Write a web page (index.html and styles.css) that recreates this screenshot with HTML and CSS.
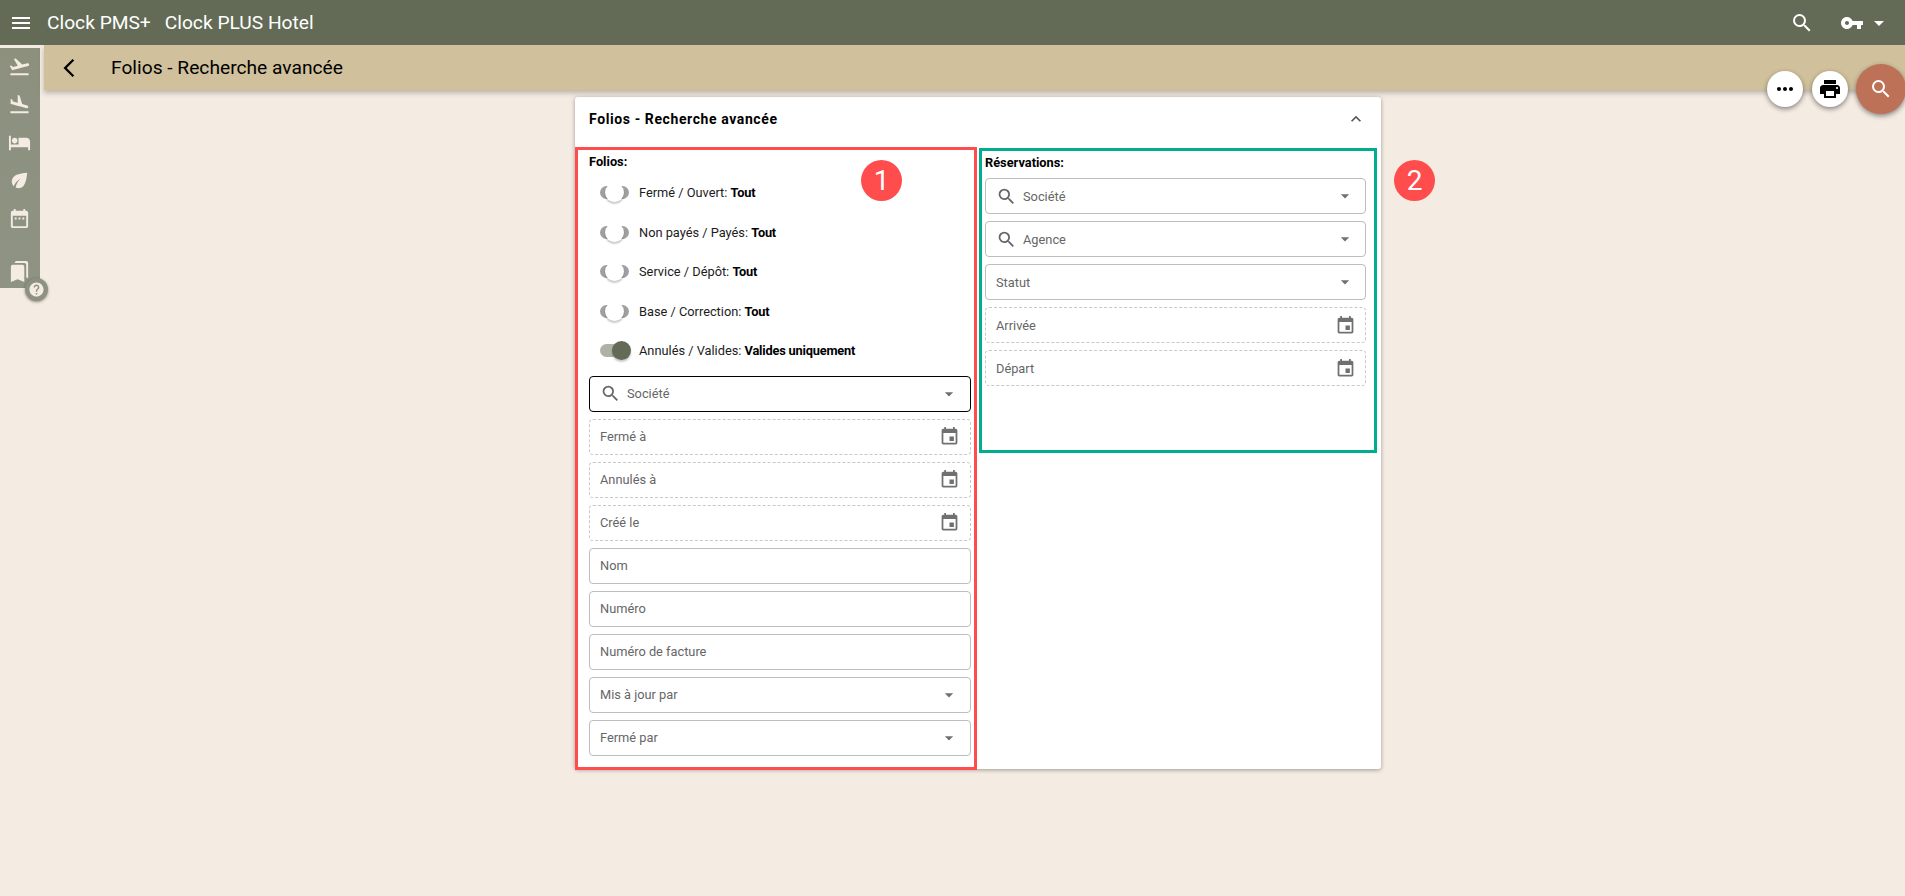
FILE: index.html
```html
<!DOCTYPE html>
<html lang="fr">
<head>
<meta charset="utf-8">
<title>Folios - Recherche avancée</title>
<link rel="stylesheet" href="styles.css">
</head>
<body>
<svg class="defs" width="0" height="0" aria-hidden="true">
  <symbol id="i-search" viewBox="0 0 24 24"><path d="M15.5 14h-.79l-.28-.27A6.47 6.47 0 0 0 16 9.5 6.5 6.5 0 1 0 9.5 16c1.61 0 3.09-.59 4.23-1.57l.27.28v.79l5 4.99L20.49 19l-4.99-5zm-6 0C7.01 14 5 11.99 5 9.5S7.01 5 9.5 5 14 7.01 14 9.5 11.99 14 9.5 14z"/></symbol>
  <symbol id="i-event" viewBox="0 0 24 24"><path d="M17 12h-5v5h5v-5zM16 1v2H8V1H6v2H5c-1.11 0-1.99.9-1.99 2L3 19c0 1.1.89 2 2 2h14c1.1 0 2-.9 2-2V5c0-1.1-.9-2-2-2h-1V1h-2zm3 18H5V8h14v11z"/></symbol>
  <symbol id="i-caret" viewBox="0 0 24 24"><path d="M7 10l5 5 5-5z"/></symbol>
</svg>

<header class="topbar">
  <svg class="ic menu-ic" viewBox="0 0 24 24"><path d="M3 18h18v-2H3v2zm0-5h18v-2H3v2zm0-7v2h18V6H3z"/></svg>
  <span class="brand">Clock PMS+</span>
  <span class="hotel">Clock PLUS Hotel</span>
  <span class="spacer"></span>
  <svg class="ic top-search"><use href="#i-search"/></svg>
  <svg class="ic top-key" viewBox="0 0 24 24"><path d="M12.65 10C11.83 7.67 9.61 6 7 6c-3.31 0-6 2.69-6 6s2.69 6 6 6c2.61 0 4.83-1.67 5.65-4H17v4h4v-4h2v-4H12.65zM7 14c-1.1 0-2-.9-2-2s.9-2 2-2 2 .9 2 2-.9 2-2 2z"/></svg>
  <svg class="ic top-caret"><use href="#i-caret"/></svg>
</header>

<div class="shell">
  <nav class="sidebar">
    <svg class="side-ic" viewBox="0 0 24 24"><path d="M2.5 19h19v2h-19zm19.57-9.36c-.21-.8-1.04-1.28-1.84-1.06L14.92 10l-6.9-6.43-1.93.51 4.14 7.17-4.97 1.33-1.97-1.54-1.45.39 1.82 3.16.77 1.33 1.6-.43 5.31-1.42 4.35-1.16L21 11.49c.81-.23 1.28-1.05 1.07-1.85z"/></svg>
    <svg class="side-ic" viewBox="0 0 24 24"><path d="M2.5 19h19v2h-19zm7.18-5.73l4.35 1.16 5.31 1.42c.8.21 1.62-.26 1.84-1.06.21-.8-.26-1.62-1.06-1.84l-5.31-1.42-2.76-9.02L10.12 2v8.28L5.15 8.95l-.93-2.32-1.45-.39v5.17l1.6.43 5.31 1.43z"/></svg>
    <svg class="side-ic" viewBox="0 0 24 24"><path d="M7 13c1.66 0 3-1.34 3-3S8.66 7 7 7s-3 1.34-3 3 1.34 3 3 3zm12-6h-8v7H3V5H1v15h2v-3h18v3h2v-9c0-2.21-1.79-4-4-4z"/></svg>
    <svg class="side-ic" viewBox="0 0 24 24"><path d="M6.05 8.05c-2.73 2.73-2.73 7.15-.02 9.88 1.47-3.4 4.09-6.24 7.36-7.93-2.77 2.34-4.71 5.61-5.39 9.32 2.6 1.23 5.8.78 7.95-1.37C19.43 14.47 20 4 20 4S9.53 4.57 6.05 8.05z"/></svg>
    <svg class="side-ic" viewBox="0 0 24 24"><path d="M9 11H7v2h2v-2zm4 0h-2v2h2v-2zm4 0h-2v2h2v-2zm2-7h-1V2h-2v2H8V2H6v2H5c-1.11 0-1.99.9-1.99 2L3 20c0 1.1.89 2 2 2h14c1.1 0 2-.9 2-2V6c0-1.1-.9-2-2-2zm0 16H5V9h14v11z"/></svg>
    <svg class="side-ic side-last" viewBox="0 0 24 24"><path d="M19 18l2 1V3c0-1.1-.9-2-2-2H8.99C7.89 1 7 1.9 7 3h10c1.1 0 2 .9 2 2v13zM15 5H5c-1.1 0-2 .9-2 2v16l7-3 7 3V7c0-1.1-.9-2-2-2z"/></svg>
    <span class="help-badge">
      <svg viewBox="0 0 24 24"><path d="M12 2C6.48 2 2 6.48 2 12s4.48 10 10 10 10-4.48 10-10S17.52 2 12 2zm1 17h-2v-2h2v2zm2.07-7.75l-.9.92C13.45 12.9 13 13.5 13 15h-2v-.5c0-1.1.45-2.1 1.17-2.83l1.24-1.26c.37-.36.59-.86.59-1.41 0-1.1-.9-2-2-2s-2 .9-2 2H8c0-2.21 1.79-4 4-4s4 1.79 4 4c0 .88-.36 1.68-.93 2.25z"/></svg>
    </span>
  </nav>

  <div class="main">
    <div class="subbar">
      <svg class="back-ic" viewBox="0 0 12 24"><path d="M11.67 3.87L9.9 2.1 0 12l9.9 9.9 1.77-1.77L3.54 12z"/></svg>
      <h1 class="page-title">Folios - Recherche avancée</h1>
    </div>

    <section class="card">
      <div class="card-head">
        <h2 class="card-title">Folios - Recherche avancée</h2>
        <svg class="collapse-ic" viewBox="0 0 24 24"><path d="M12 8l-6 6 1.41 1.41L12 10.83l4.59 4.58L18 14z"/></svg>
      </div>
      <div class="card-body">
        <div class="col col-left">
          <div class="col-title">Folios:</div>
          <div class="toggle-row"><span class="toggle"></span><span>Fermé / Ouvert: <b>Tout</b></span></div>
          <div class="toggle-row"><span class="toggle"></span><span>Non payés / Payés: <b>Tout</b></span></div>
          <div class="toggle-row"><span class="toggle"></span><span>Service / Dépôt: <b>Tout</b></span></div>
          <div class="toggle-row"><span class="toggle"></span><span>Base / Correction: <b>Tout</b></span></div>
          <div class="toggle-row"><span class="toggle on"></span><span>Annulés / Valides: <b>Valides uniquement</b></span></div>
          <div class="fields fields-left">
            <div class="field focus"><svg class="f-search"><use href="#i-search"/></svg><span class="f-label">Société</span><svg class="f-caret"><use href="#i-caret"/></svg></div>
            <div class="field dashed"><span class="f-label">Fermé à</span><svg class="f-cal"><use href="#i-event"/></svg></div>
            <div class="field dashed"><span class="f-label">Annulés à</span><svg class="f-cal"><use href="#i-event"/></svg></div>
            <div class="field dashed"><span class="f-label">Créé le</span><svg class="f-cal"><use href="#i-event"/></svg></div>
            <div class="field"><span class="f-label">Nom</span></div>
            <div class="field"><span class="f-label">Numéro</span></div>
            <div class="field"><span class="f-label">Numéro de facture</span></div>
            <div class="field"><span class="f-label">Mis à jour par</span><svg class="f-caret"><use href="#i-caret"/></svg></div>
            <div class="field"><span class="f-label">Fermé par</span><svg class="f-caret"><use href="#i-caret"/></svg></div>
          </div>
          <span class="marker marker-1">1</span>
        </div>
        <div class="col col-right">
          <div class="col-title">Réservations:</div>
          <div class="fields fields-right">
            <div class="field"><svg class="f-search"><use href="#i-search"/></svg><span class="f-label">Société</span><svg class="f-caret"><use href="#i-caret"/></svg></div>
            <div class="field"><svg class="f-search"><use href="#i-search"/></svg><span class="f-label">Agence</span><svg class="f-caret"><use href="#i-caret"/></svg></div>
            <div class="field"><span class="f-label">Statut</span><svg class="f-caret"><use href="#i-caret"/></svg></div>
            <div class="field dashed"><span class="f-label">Arrivée</span><svg class="f-cal"><use href="#i-event"/></svg></div>
            <div class="field dashed"><span class="f-label">Départ</span><svg class="f-cal"><use href="#i-event"/></svg></div>
          </div>
          <span class="marker marker-2">2</span>
        </div>
      </div>
    </section>
  </div>
</div>

<div class="fab-group">
  <span class="fab fab-small"><svg viewBox="0 0 24 24"><path d="M6 10c-1.1 0-2 .9-2 2s.9 2 2 2 2-.9 2-2-.9-2-2-2zm12 0c-1.1 0-2 .9-2 2s.9 2 2 2 2-.9 2-2-.9-2-2-2zm-6 0c-1.1 0-2 .9-2 2s.9 2 2 2 2-.9 2-2-.9-2-2-2z"/></svg></span>
  <span class="fab fab-small"><svg viewBox="0 0 24 24"><path d="M19 8H5c-1.66 0-3 1.34-3 3v6h4v4h12v-4h4v-6c0-1.66-1.34-3-3-3zm-3 11H8v-5h8v5zm3-7c-.55 0-1-.45-1-1s.45-1 1-1 1 .45 1 1-.45 1-1 1zm-1-9H6v4h12V3z"/></svg></span>
  <span class="fab fab-main"><svg><use href="#i-search"/></svg></span>
</div>
</body>
</html>
```
FILE: styles.css
```css
* { box-sizing: border-box; }
html, body { height: 100%; }
body {
  margin: 0;
  background: #f4ebe2;
  font-family: Roboto, "Liberation Sans", sans-serif;
  font-size: 12.8px;
  color: #000;
  overflow: hidden;
}
svg { display: block; flex: none; fill: currentColor; }
.defs { position: absolute; }

.topbar {
  height: 45px;
  background: #636b56;
  color: #fff;
  display: flex;
  align-items: center;
  padding-left: 9px;
  font-size: 19.2px;
  position: relative;
  z-index: 3;
}
.menu-ic { width: 24px; height: 24px; margin-right: 14px; }
.brand { margin-right: 14px; }
.spacer { flex: 1; }
.top-search { width: 24px; height: 24px; margin-right: 26px; }
.top-key { width: 24px; height: 24px; margin-right: 3px; }
.top-caret { width: 24px; height: 24px; margin-right: 14px; }

.shell { display: flex; }
.sidebar {
  width: 40px;
  height: 240px;
  margin-top: 3px;
  margin-right: 4px;
  background: linear-gradient(#8c907d, #8f9383);
  color: #f4ebe2;
  position: relative;
  display: flex;
  flex-direction: column;
  align-items: center;
  padding: 7px 2px 0 0;
  gap: 15px;
}
.side-ic { width: 23px; height: 23px; }
.side-last { margin-top: 15px; }
.help-badge {
  position: absolute;
  left: 25px;
  top: 230px;
  width: 23px;
  height: 23px;
  border-radius: 50%;
  background: #8d917f;
  box-shadow: 0 1px 3px rgba(0,0,0,.4);
  display: flex;
  align-items: center;
  justify-content: center;
  color: #f4ebe2;
}
.help-badge svg { width: 17px; height: 17px; }

.main { flex: 1; min-width: 0; }
.subbar {
  height: 45px;
  background: #d0c09c;
  display: flex;
  align-items: center;
  padding-left: 19px;
  box-shadow: 0 3px 5px rgba(60,50,40,.3);
  position: relative;
}
.back-ic { width: 12px; height: 22px; margin-right: 36px; }
.page-title { margin: 0; font-size: 19.2px; font-weight: 400; }

.card {
  width: 806px;
  margin: 7px 0 0 531px;
  background: #fff;
  border-radius: 3px;
  box-shadow: 0 1px 4px rgba(0,0,0,.35);
  height: 672px;
}
.card-head {
  height: 50px;
  display: flex;
  align-items: center;
  justify-content: space-between;
  padding: 0 15px 7px 14px;
}
.card-title { margin: 0; font-size: 14px; font-weight: 700; letter-spacing: .6px; }
.collapse-ic { width: 20px; height: 20px; color: #555; }

.card-body { display: flex; align-items: flex-start; }
.col { position: relative; }
.col-left {
  width: 402px;
  height: 623px;
  border: 3px solid #ff4d4d;
  padding: 0 3px 0 11px;
}
.col-right {
  width: 398px;
  height: 305px;
  margin: 1px 0 0 2px;
  border: 3px solid #00ad8e;
  padding: 0 8px 0 3px;
}
.col-title {
  font-weight: 700;
  height: 23px;
  line-height: 24px;
}
.col-right .col-title { height: 27px; line-height: 24px; }

.toggle-row {
  height: 39.5px;
  display: flex;
  align-items: center;
  gap: 10px;
  padding-left: 11px;
  color: #1c1c1c;
}
.toggle-row b { color: #000; letter-spacing: -.2px; }
.toggle {
  width: 29px;
  height: 13px;
  border-radius: 7px;
  background: #a0a0a0;
  position: relative;
  flex: none;
}
.toggle::after {
  content: "";
  position: absolute;
  left: 5px;
  top: -3px;
  width: 19px;
  height: 19px;
  border-radius: 50%;
  background: #fff;
  box-shadow: 0 2px 2px rgba(0,0,0,.22);
}
.toggle.on { background: #aeb2a4; }
.toggle.on::after {
  left: 12px;
  background: #636b56;
}

.fields { display: flex; flex-direction: column; gap: 7px; }
.fields-left { margin-top: 5px; }
.field {
  height: 36px;
  border: 1px solid #bdbdbd;
  border-radius: 4px;
  display: flex;
  align-items: center;
  padding: 0 10px;
  color: #666;
  background: #fff;
}
.field.dashed { border: 1px dashed #c8c8c8; }
.field.focus { border-color: #000; }
.f-label { flex: 1; }
.f-search { width: 21px; height: 21px; margin-right: 6px; }
.f-caret { width: 20px; height: 20px; color: #707070; margin-right: 1px; }
.f-cal { width: 21px; height: 21px; color: #707070; }
.fields-right .f-caret { margin-right: 0; }
.fields-right .f-cal { margin-right: -1px; }

.marker {
  position: absolute;
  width: 41px;
  height: 41px;
  border-radius: 50%;
  background: #ff4d4d;
  color: #fff;
  font-size: 28px;
  line-height: 41px;
  text-align: center;
}
.marker-1 { left: 283px; top: 10px; }
.marker-2 { left: 412px; top: 9px; }

.fab-group { position: absolute; top: 64px; right: -1px; display: flex; align-items: center; gap: 9px; }
.fab {
  border-radius: 50%;
  display: flex;
  align-items: center;
  justify-content: center;
  box-shadow: 0 2px 5px rgba(0,0,0,.45);
}
.fab-small { width: 36px; height: 36px; background: #fff; position: relative; left: 1px; }
.fab-small svg { width: 24px; height: 24px; }
.fab-main { width: 50px; height: 50px; background: #bd7156; color: #fff; }
.fab-main svg { width: 24px; height: 24px; }
```
